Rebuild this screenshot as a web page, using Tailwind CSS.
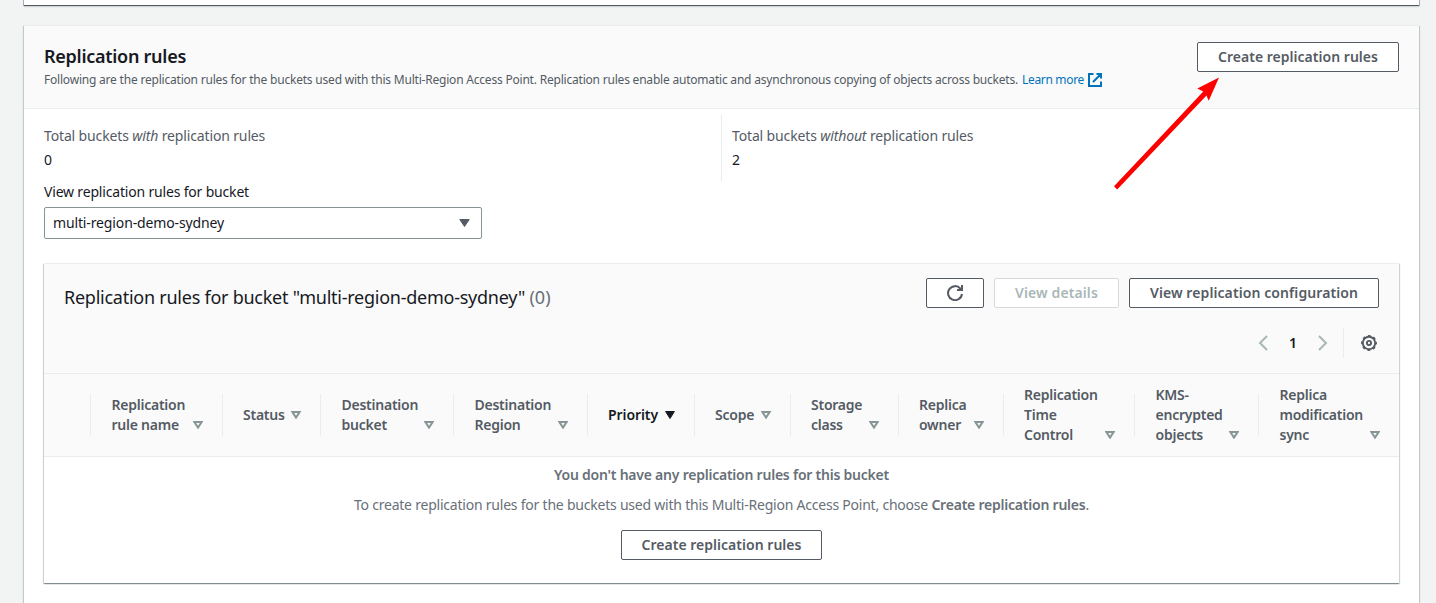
<!DOCTYPE html>
<html lang="en">
<head>
<meta charset="utf-8">
<title>Replication rules</title>
<script src="https://cdn.jsdelivr.net/npm/@tailwindcss/browser@4"></script>
</head>
<body class="relative h-[603px] overflow-hidden bg-[#f2f3f3] font-['Noto_Sans',sans-serif] text-[14px] leading-[20px] text-[#16191f]">
<svg class="hidden">
  <symbol id="sort" viewBox="0 0 10 8"><path d="M1.4 1h7.2L5 6.6z" fill="none" stroke="#879596" stroke-width="2"/></symbol>
</svg>

<section class="mx-6 mr-[17px] h-[6px] border-b border-[#545b64] bg-white shadow-[0_1px_1px_0_rgba(0,28,36,.15),1px_0_0_0_rgba(0,28,36,.3),-1px_0_0_0_rgba(0,28,36,.3)]"></section>

<section class="ml-6 mr-[17px] mt-[19px] h-[578px] border-t border-[#eaeded] bg-white shadow-[0_1px_1px_0_rgba(0,28,36,.3),1px_1px_1px_0_rgba(0,28,36,.15),-1px_1px_1px_0_rgba(0,28,36,.15)]">
  <header class="flex h-[83px] justify-between border-b border-[#eaeded] bg-[#fafafa] pl-5 pr-5 pt-4">
    <div class="pt-[3px]">
      <h2 class="text-[18px] font-semibold leading-[22px] tracking-[-0.27px]">Replication rules</h2>
      <p class="flex whitespace-nowrap pt-[4px] text-[12px] leading-[18px] tracking-[-0.206px] text-[#545b64]">
        <span class="w-[978px]">Following are the replication rules for the buckets used with this Multi-Region Access Point. Replication rules enable automatic and asynchronous copying of objects across buckets.</span>
        <a class="flex items-center gap-[4px] tracking-[-0.32px] text-[#0073bb]">Learn more
          <svg class="h-[14px] w-[14px]" viewBox="0 0 14 14" fill="none" stroke="#0073bb" stroke-width="2"><path d="M5.5 1H1v12h12V8.5M8.5 1H13v4.5M13 1L5 9"/></svg>
        </a>
      </p>
    </div>
    <button class="flex h-[30px] w-[202px] items-center justify-center rounded-[2px] border border-[#545b64] bg-white font-semibold tracking-[0.024px] text-[#545b64]">Create replication rules</button>
  </header>

  <div class="flex pt-[6px]">
    <div class="h-[66px] w-[697px] pl-5 pt-[11px]">
      <div class="tracking-[-0.14px] text-[#545b64]">Total buckets <em>with</em> replication rules</div>
      <div class="pt-1">0</div>
    </div>
    <div class="h-[66px] border-l border-[#eaeded] pl-[10px] pt-[11px]">
      <div class="tracking-[-0.14px] text-[#545b64]">Total buckets <em>without</em> replication rules</div>
      <div class="pt-1">2</div>
    </div>
  </div>

  <div class="px-5">
    <label class="block pt-[1px] tracking-[-0.18px]">View replication rules for bucket</label>
    <div class="mt-[5px] flex h-8 w-[438px] items-center justify-between rounded-[2px] border border-[#879596] bg-white pl-[8px] pr-[11px] tracking-[-0.134px]">
      multi-region-demo-sydney
      <svg class="h-[8px] w-[11px]" viewBox="0 0 11 8"><path d="M.8.5h9.4L5.5 7.5z" fill="#545b64" stroke="#545b64" stroke-linejoin="round"/></svg>
    </div>

    <section class="mt-[24px] h-[320px] border-t border-[#eaeded] bg-white shadow-[0_1px_1px_0_rgba(0,28,36,.3),1px_1px_1px_0_rgba(0,28,36,.15),-1px_1px_1px_0_rgba(0,28,36,.15)]">
      <div class="h-[110px] border-b border-[#eaeded] bg-[#fafafa] px-5 pt-[14px]">
        <div class="flex justify-between">
          <h3 class="pt-[8px] text-[18px] leading-[22px] tracking-[-0.25px]">Replication rules for bucket "multi-region-demo-sydney" <span class="tracking-normal text-[#687078]">(0)</span></h3>
          <div class="flex gap-[10px] font-semibold text-[#545b64]">
            <button class="flex h-[30px] w-[58px] items-center justify-center rounded-[2px] border border-[#545b64] bg-white">
              <svg class="h-4 w-4" viewBox="0 0 16 16" fill="none" stroke="#545b64" stroke-width="2"><path d="M15 9a7 7 0 1 1-1.6-5.4L15 5"/><path d="M10 5h5V0"/></svg>
            </button>
            <button class="flex h-[30px] w-[125px] items-center justify-center rounded-[2px] border border-[#d5dbdb] bg-white tracking-[0.11px] text-[#aab7b8]">View details</button>
            <button class="flex h-[30px] w-[250px] items-center justify-center rounded-[2px] border border-[#545b64] bg-white tracking-[0.09px]">View replication configuration</button>
          </div>
        </div>
        <div class="mt-[20px] flex h-[32px] items-center justify-end pb-[2px]">
          <svg class="h-4 w-[10px]" viewBox="0 0 10 16" fill="none" stroke="#aab7b8" stroke-width="2"><path d="M9 1L2 8l7 7"/></svg>
          <span class="w-[50px] text-center font-semibold">1</span>
          <svg class="h-4 w-[10px]" viewBox="0 0 10 16" fill="none" stroke="#aab7b8" stroke-width="2"><path d="M1 1l7 7-7 7"/></svg>
          <span class="ml-[15px] mr-[17px] h-[30px] w-px bg-[#eaeded]"></span>
          <svg class="mr-[2px] h-4 w-4" viewBox="0 0 16 16" fill="none" stroke="#545b64"><circle cx="8" cy="8" r="6.2" stroke-width="1.9"/><circle cx="8" cy="8" r="7.2" stroke-width="1.5" stroke-dasharray="2.83 2.83" stroke-dashoffset="1.4"/><circle cx="8" cy="8" r="2.1" stroke-width="1.9"/></svg>
        </div>
      </div>

      <div class="flex h-[83px] items-center border-b border-[#eaeded] bg-[#fafafa] font-semibold tracking-[-0.24px] text-[#545b64]">
        <div class="h-[42px] w-[47px] border-r border-[#eaeded]"></div>
        <div class="flex h-[42px] w-[132px] items-center border-r border-[#eaeded] pl-[20.5px] pr-[19px]"><div class="flex flex-1 items-end justify-between"><span>Replication<br>rule name</span><svg class="mb-[6px] h-2 w-[10px]"><use href="#sort"/></svg></div></div>
        <div class="flex h-[42px] w-[98px] items-center border-r border-[#eaeded] pl-[20px] pr-[19px]"><div class="flex flex-1 items-end justify-between"><span>Status</span><svg class="mb-[6px] h-2 w-[10px]"><use href="#sort"/></svg></div></div>
        <div class="flex h-[42px] w-[133px] items-center border-r border-[#eaeded] pl-[20.5px] pr-[19px]"><div class="flex flex-1 items-end justify-between"><span>Destination<br>bucket</span><svg class="mb-[6px] h-2 w-[10px]"><use href="#sort"/></svg></div></div>
        <div class="flex h-[42px] w-[134px] items-center border-r border-[#eaeded] pl-[20.5px] pr-[19px]"><div class="flex flex-1 items-end justify-between"><span>Destination<br>Region</span><svg class="mb-[6px] h-2 w-[10px]"><use href="#sort"/></svg></div></div>
        <div class="flex h-[42px] w-[107px] items-center border-r border-[#eaeded] pl-[20px] pr-[19px]"><div class="flex flex-1 items-end justify-between"><span class="tracking-[-0.09px] text-[#16191f]">Priority</span><svg class="mb-[6px] h-2 w-[10px]" viewBox="0 0 10 8"><path d="M.6.5h8.8L5 7.5z" fill="#16191f" stroke="#16191f"/></svg></div></div>
        <div class="flex h-[42px] w-[96px] items-center border-r border-[#eaeded] pl-[20px] pr-[19px]"><div class="flex flex-1 items-end justify-between"><span>Scope</span><svg class="mb-[6px] h-2 w-[10px]"><use href="#sort"/></svg></div></div>
        <div class="flex h-[42px] w-[108px] items-center border-r border-[#eaeded] pl-[20px] pr-[19px]"><div class="flex flex-1 items-end justify-between"><span>Storage<br>class</span><svg class="mb-[6px] h-2 w-[10px]"><use href="#sort"/></svg></div></div>
        <div class="flex h-[42px] w-[105px] items-center border-r border-[#eaeded] pl-[20px] pr-[19px]"><div class="flex flex-1 items-end justify-between"><span>Replica<br>owner</span><svg class="mb-[6px] h-2 w-[10px]"><use href="#sort"/></svg></div></div>
        <div class="flex h-[42px] w-[131px] items-center border-r border-[#eaeded] pl-[20px] pr-[19px]"><div class="flex flex-1 items-end justify-between"><span>Replication<br>Time<br>Control</span><svg class="mb-[6px] h-2 w-[10px]"><use href="#sort"/></svg></div></div>
        <div class="flex h-[42px] w-[124px] items-center border-r border-[#eaeded] pl-[20.5px] pr-[19px]"><div class="flex flex-1 items-end justify-between"><span>KMS-<br>encrypted<br>objects</span><svg class="mb-[6px] h-2 w-[10px]"><use href="#sort"/></svg></div></div>
        <div class="flex h-[42px] flex-1 items-center pl-[20.5px] pr-[19px]"><div class="flex flex-1 items-end justify-between"><span>Replica<br>modification<br>sync</span><svg class="mb-[6px] h-2 w-[10px]"><use href="#sort"/></svg></div></div>
      </div>

      <div class="flex flex-col items-center pt-[8px] text-[#687078]">
        <p class="font-semibold tracking-[-0.23px]">You don't have any replication rules for this bucket</p>
        <p class="mt-[10px] tracking-[-0.222px]">To create replication rules for the buckets used with this Multi-Region Access Point, choose <b class="font-semibold">Create replication rules</b>.</p>
        <button class="mt-[15px] flex h-[30px] w-[201px] items-center justify-center rounded-[2px] border border-[#545b64] bg-white font-semibold tracking-[0.024px] text-[#545b64]">Create replication rules</button>
      </div>
    </section>
  </div>
</section>

<svg class="absolute left-[1110px] top-[72px] h-[120px] w-[115px]" viewBox="1110 72 115 120"><path d="M1117.2 189.4L1206.5 95.5 1208.7 100.8 1219 77.5 1197.3 88.6 1203.3 91.4 1114 186.3z" fill="#f00"/></svg>
</body>
</html>
